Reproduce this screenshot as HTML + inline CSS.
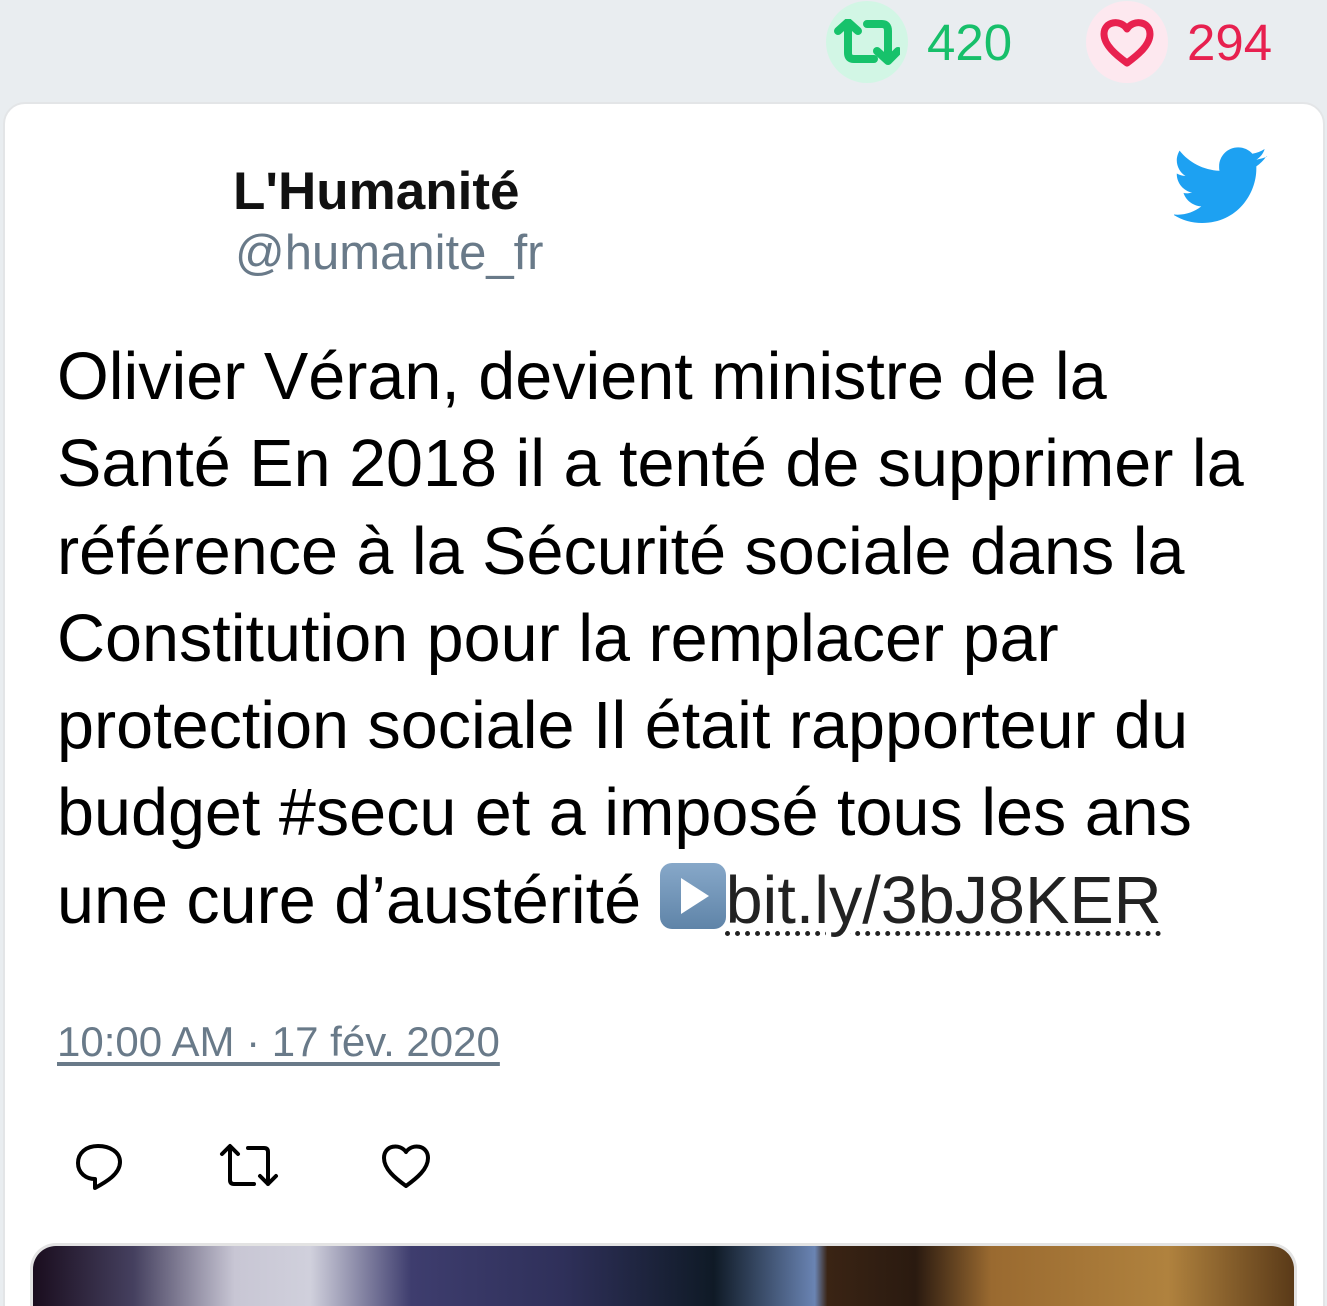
<!DOCTYPE html>
<html><head><meta charset="utf-8"><style>
html,body{margin:0;padding:0;width:1327px;height:1306px;overflow:hidden}
body{background:#e9edf0;font-family:"Liberation Sans",sans-serif;position:relative}
.stat{position:absolute;top:0;height:84px;display:flex;align-items:center}
.circ{width:82px;height:82px;border-radius:50%;display:flex;align-items:center;justify-content:center}
.num{font-size:51px;margin-left:19px}
.card{position:absolute;left:3px;top:102px;width:1322px;height:1230px;background:#fff;border:2px solid #e3e5e7;border-radius:22px;box-sizing:border-box}
.name{position:absolute;left:233px;top:164px;font-size:53px;font-weight:bold;color:#111;line-height:56px}
.handle{position:absolute;left:235px;top:226px;font-size:49px;color:#697a89;line-height:54px}
.text{position:absolute;left:57px;top:334px;width:1260px;white-space:nowrap;font-size:66.5px;line-height:87.3px;color:#000}
.link{color:#222;text-decoration:underline dotted;text-underline-offset:8px;text-decoration-thickness:5px}
.emoji{display:inline-block;width:66px;height:66px;background:linear-gradient(#87a8c9,#5f84a8);border-radius:12px;vertical-align:-6px;position:relative}
.emoji:after{content:"";position:absolute;left:21px;top:15px;border-left:28px solid #fff;border-top:18px solid transparent;border-bottom:18px solid transparent}
.time{position:absolute;left:57px;top:1018px;font-size:42px;color:#697a89;text-decoration:underline;text-underline-offset:6px}
.img{position:absolute;left:30px;top:1243px;width:1267px;height:63px;border:3px solid #e3e3e3;border-bottom:none;border-radius:26px 26px 0 0;box-sizing:border-box;overflow:hidden;background:linear-gradient(90deg,#1a0d1e 0%,#45405f 8%,#c8c6d4 16%,#d0d0dc 22%,#3e3d6e 30%,#2f305a 42%,#0f1a26 54%,#6a84b3 62%,#3a2414 63%,#2a1a10 70%,#9a6a30 76%,#b0823e 90%,#5a3a18 100%)}
</style></head><body>
<div class="stat" style="left:826px">
 <div class="circ" style="background:#d2f6e5">
  <svg width="66" height="46" viewBox="0 0 66 46" fill="none" stroke="#17c26b" stroke-width="8" stroke-linecap="round" stroke-linejoin="round"><path d="M4 12 L14 3 L24 12 M14 4 V34 Q14 40 20 40 H40"/><path d="M33 5 H48 Q54 5 54 12 V42 M43 32 L54 42 L64 32"/></svg>
 </div><span class="num" style="color:#17bf6a">420</span></div>
<div class="stat" style="left:1086px">
 <div class="circ" style="background:#fde8ef">
  <svg width="54" height="50" viewBox="0 0 54 50"><path d="M27 12 C21 2 4 4 4 17 C4 28 16 38 27 46 C38 38 50 28 50 17 C50 4 33 2 27 12Z" fill="none" stroke="#e8214f" stroke-width="7" stroke-linejoin="round"/></svg>
 </div><span class="num" style="color:#e7204f">294</span></div>
<div class="card"></div>
<div class="name">L'Humanité</div>
<div class="handle">@humanite_fr</div>
<svg style="position:absolute;left:1174px;top:147px" width="95" height="80" viewBox="0 0 24 20"><path fill="#1da1f2" d="M23.6 2.3c-.9.4-1.8.6-2.8.8 1-.6 1.8-1.6 2.1-2.7-.9.6-2 1-3.1 1.2C18.9.6 17.6 0 16.2 0c-2.7 0-4.8 2.2-4.8 4.8 0 .4 0 .8.1 1.1C7.4 5.7 3.8 3.8 1.4.8c-.4.7-.7 1.6-.7 2.4 0 1.7.9 3.2 2.2 4-.8 0-1.5-.2-2.2-.6v.1c0 2.3 1.7 4.3 3.9 4.7-.4.1-.8.2-1.3.2-.3 0-.6 0-.9-.1.6 1.9 2.4 3.3 4.5 3.4-1.7 1.3-3.7 2.1-6 2.1-.4 0-.8 0-1.2-.1 2.1 1.4 4.7 2.2 7.4 2.2 8.9 0 13.7-7.4 13.7-13.7v-.6c1-.7 1.8-1.5 2.5-2.5z"/></svg>
<div class="text">Olivier Véran, devient ministre de la<br>Santé En 2018 il a tenté de supprimer la<br>référence à la Sécurité sociale dans la<br>Constitution pour la remplacer par<br>protection sociale Il était rapporteur du<br>budget #secu et a imposé tous les ans<br>une cure d’austérité <span class="emoji"></span><span class="link">bit.ly/3bJ8KER</span></div>
<div class="time">10:00 AM · 17 fév. 2020</div>
<svg style="position:absolute;left:74px;top:1140px" width="52" height="52" viewBox="0 0 52 52" fill="none" stroke="#000" stroke-width="4" stroke-linejoin="round"><path d="M24 6 C12 6 4 13 4 23 C4 33 12 39 21 39 L21 48 C32 42 46 34 46 22 C46 12 36 6 24 6Z"/></svg>
<svg style="position:absolute;left:218px;top:1142px" width="66" height="48" viewBox="0 0 66 48" fill="none" stroke="#000" stroke-width="4" stroke-linecap="round" stroke-linejoin="round"><path d="M4 12 L12 4 L20 12 M12 5 V38 Q12 42 16 42 H36"/><path d="M30 6 H46 Q50 6 50 10 V42 M42 34 L50 42 L58 34"/></svg>
<svg style="position:absolute;left:380px;top:1142px" width="52" height="48" viewBox="0 0 52 48"><path d="M26 10 C20 1 4 3 4 16 C4 27 15 36 26 44 C37 36 48 27 48 16 C48 3 32 1 26 10Z" fill="none" stroke="#000" stroke-width="4" stroke-linejoin="round"/></svg>
<div class="img"></div>
</body></html>
